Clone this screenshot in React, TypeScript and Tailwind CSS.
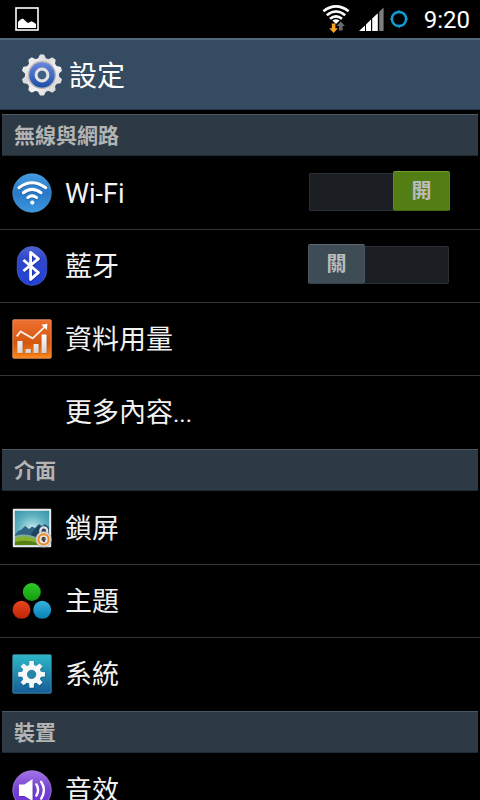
import { useState, type ReactNode } from "react";

const FONT = "font-['Roboto','Noto_Sans_CJK_TC',sans-serif]";

function gearPath(cx: number, cy: number, teeth: number, outer: number, inner: number, tip: number, base: number) {
  const points: string[] = [];
  for (let i = 0; i < teeth; i++) {
    const angle = (i * 2 * Math.PI) / teeth - Math.PI / 2;
    const corners = [
      [inner, -base],
      [outer, -tip],
      [outer, tip],
      [inner, base],
    ];
    for (const [r, w] of corners) {
      const x = cx + r * Math.cos(angle) - w * Math.sin(angle);
      const y = cy + r * Math.sin(angle) + w * Math.cos(angle);
      points.push(`${x.toFixed(2)} ${y.toFixed(2)}`);
    }
  }
  return `M${points.join("L")}Z`;
}

function SettingsGear() {
  return (
    <svg width="42" height="42" viewBox="0 0 42 42" aria-hidden="true">
      <defs>
        <linearGradient id="sg-metal" x1="0" y1="0" x2="1" y2="1">
          <stop offset="0" stopColor="#fff" />
          <stop offset=".35" stopColor="#d8d8d8" />
          <stop offset=".6" stopColor="#f4f4f4" />
          <stop offset="1" stopColor="#c9c9c9" />
        </linearGradient>
        <linearGradient id="sg-blue" x1="0" y1="0" x2="0" y2="1">
          <stop offset="0" stopColor="#6b87dd" />
          <stop offset="1" stopColor="#1c4ea6" />
        </linearGradient>
      </defs>
      <path d={gearPath(21, 21, 10, 19.6, 16, 1.6, 3.4)} fill="url(#sg-metal)" stroke="url(#sg-metal)" strokeWidth="1.6" strokeLinejoin="round" />
      <circle cx="21" cy="21" r="16.8" fill="url(#sg-metal)" />
      <circle cx="21" cy="21" r="13.4" fill="none" stroke="#b8b1ab" strokeWidth="1.2" />
      <circle cx="21" cy="21" r="12.8" fill="url(#sg-blue)" />
      <circle cx="21" cy="21" r="5.8" fill="none" stroke="#e2e2e2" strokeWidth="3.2" />
      <circle cx="21" cy="21" r="4.3" fill="#3f5f83" />
    </svg>
  );
}

function PictureIcon() {
  return (
    <svg width="24" height="24" viewBox="0 0 24 24" aria-hidden="true">
      <rect x="1" y="1" width="22" height="22" fill="#000" stroke="#fff" strokeWidth="1.6" />
      <path d="M3 21V15L5 13L7.5 11.5L9 12.5L11 14.5L13 16L16.5 14.3L19 15.5L21 17V21Z" fill="#fff" />
    </svg>
  );
}

function StatusWifi() {
  return (
    <svg width="28" height="28" viewBox="0 0 28 28" aria-hidden="true">
      <g fill="none" stroke="#fff" strokeWidth="2.6">
        <path d="M1.4 6.2Q14 -3.4 26.6 6.2" />
        <path d="M4.8 10.2Q14 2.8 23.2 10.2" />
        <path d="M8 13.8Q14 8.8 20 13.8" />
      </g>
      <path d="M10.4 15.4Q14 13 17.6 15.4L14 19Z" fill="#fff" />
      <path d="M9.8 18.6H13.4V23.2H16L11.6 28L7.2 23.2H9.8Z" fill="#f7a021" />
      <path d="M17 25.6H20.6V21H23L18.8 16.4L14.4 21H17Z" fill="#6b6b6b" />
    </svg>
  );
}

function StatusSignal() {
  return (
    <svg width="25" height="24" viewBox="0 0 25 24" aria-hidden="true">
      <path d="M0 24L6 18.4V24ZM7 17.4L12 12.6V24H7ZM13.2 11.4L18.8 6.2V24H13.2Z" fill="#fff" />
      <path d="M20.2 4.8L24.6 0.4V24H20.2Z" fill="#7d7d7d" />
    </svg>
  );
}

function StatusRing() {
  return (
    <svg width="18" height="18" viewBox="0 0 18 18" aria-hidden="true">
      <circle cx="9" cy="9" r="7.1" fill="none" stroke="#0d9bd3" strokeWidth="2.5" />
      <path d="M8.2 .2H9.6V1.4H8.2ZM.2 8.4H1.4V9.8H.2ZM16.4 8H17.8V9.4H16.4ZM8.4 16.6H9.8V17.8H8.4Z" fill="#0d9bd3" />
    </svg>
  );
}

function WifiIcon() {
  return (
    <svg width="40" height="40" viewBox="0 0 40 40" aria-hidden="true">
      <defs>
        <linearGradient id="wf" x1="0" y1="0" x2="0" y2="1">
          <stop offset="0" stopColor="#429ce4" />
          <stop offset=".5" stopColor="#2a78c6" />
          <stop offset="1" stopColor="#3c97e2" />
        </linearGradient>
      </defs>
      <circle cx="20" cy="20" r="19.2" fill="url(#wf)" stroke="#5aa2dd" strokeWidth=".7" />
      <g fill="none" strokeWidth="3" strokeLinecap="round">
        <g stroke="#184f88" opacity=".5">
          <path d="M7 15.8Q20 5.8 33.6 15.8M11.4 20.8Q20 14 29 20.8M15.8 25.6Q20 22.2 24.6 25.6" />
        </g>
        <g stroke="#fff">
          <path d="M7 14.8Q20 4.8 33.6 14.8M11.4 19.8Q20 13 29 19.8M15.8 24.6Q20 21.2 24.6 24.6" />
        </g>
      </g>
      <circle cx="20.3" cy="29.6" r="2.1" fill="#fff" />
    </svg>
  );
}

function BluetoothIcon() {
  return (
    <svg width="40" height="40" viewBox="0 0 40 40" aria-hidden="true">
      <defs>
        <linearGradient id="bt" x1="0" y1="0" x2="0" y2="1">
          <stop offset="0" stopColor="#4f63d0" />
          <stop offset=".3" stopColor="#3148cb" />
          <stop offset="1" stopColor="#2141d8" />
        </linearGradient>
      </defs>
      <rect x="5.2" y=".5" width="29.6" height="39" rx="14.8" ry="15" fill="url(#bt)" stroke="#5567c4" strokeWidth=".6" />
      <path d="M11.4 14L26.4 26.6L18.6 33.4V6.4L26.4 12.8L11.4 25" transform="translate(.6 1)" fill="none" stroke="#14268a" strokeWidth="2.8" opacity=".6" />
      <path d="M11.4 14L26.4 26.6L18.6 33.4V6.4L26.4 12.8L11.4 25" fill="none" stroke="#fff" strokeWidth="2.8" strokeLinejoin="round" />
    </svg>
  );
}

function DataIcon() {
  return (
    <svg width="40" height="40" viewBox="0 0 40 40" aria-hidden="true">
      <defs>
        <linearGradient id="du" x1="0" y1="0" x2="0" y2="1">
          <stop offset="0" stopColor="#ee7030" />
          <stop offset=".6" stopColor="#d4560f" />
          <stop offset="1" stopColor="#f98619" />
        </linearGradient>
        <linearGradient id="du-bar" x1="0" y1="0" x2="0" y2="1">
          <stop offset="0" stopColor="#fff" />
          <stop offset="1" stopColor="#d3d3d3" />
        </linearGradient>
      </defs>
      <rect x=".8" y=".8" width="38.4" height="38.4" rx="1" fill="url(#du)" stroke="#f3a06b" strokeWidth=".8" />
      <path d="M6 22.6H11.2V34.6H6ZM14 30.6H19.4V34.6H14ZM22 25.6H27.2V34.6H22ZM30 16.2H35.2V34.6H30Z" fill="#8f3705" opacity=".5" />
      <path d="M5.4 22H10.6V34H5.4ZM13.6 30H18.8V34H13.6ZM21.6 25H26.6V34H21.6ZM29.6 15.6H34.6V34H29.6Z" fill="url(#du-bar)" />
      <path d="M4.8 17.4L8.6 12.4L20.6 19.4L33 7.6" fill="none" stroke="#f8efe8" strokeWidth="1.8" />
      <path d="M29.4 5.8L35.4 4.8L34.8 11Z" fill="#fff" />
    </svg>
  );
}

function LockScreenIcon() {
  return (
    <svg width="40" height="40" viewBox="0 0 40 40" aria-hidden="true">
      <defs>
        <radialGradient id="ls" cx=".5" cy=".55" r=".7">
          <stop offset="0" stopColor="#f2fbfb" />
          <stop offset=".22" stopColor="#a3d6df" />
          <stop offset=".6" stopColor="#5eb0c0" />
          <stop offset="1" stopColor="#3b95a8" />
        </radialGradient>
      </defs>
      <rect x=".8" y=".8" width="38.4" height="38.4" rx="1" fill="#e9ebeb" />
      <rect x="2.8" y="2.8" width="34.4" height="34.4" fill="url(#ls)" />
      <path d="M3 27L6 23L9 22L13 18L17 21L20 18.6L23 20L27 16L30 18L33 16L37 19V32H3Z" fill="#2f6381" />
      <path d="M18 27L23 21L27 17L30 20L33 17L37 21V32H14Z" fill="#1e4260" />
      <path d="M3 28Q13 24.6 24 29L37 31V32H3Z" fill="#79ad9c" />
      <path d="M3 30Q14 26.6 23 31L37 34V37H3Z" fill="#86b22b" />
      <path d="M3 34Q14 31 26 35V37H3Z" fill="#577f15" />
      <path d="M28.4 25V22.8A3.4 3.4 0 0 1 35.2 22.8V26" fill="none" stroke="#e2e2e2" strokeWidth="2.4" />
      <circle cx="31.6" cy="31.4" r="7.9" fill="#dedcd9" stroke="#8a8885" strokeWidth=".5" />
      <circle cx="31.6" cy="31.4" r="5.1" fill="#e8e6e4" stroke="#eb8a20" strokeWidth="2" />
      <circle cx="31.6" cy="31" r="2.2" fill="#4b4d52" />
      <path d="M31 31H33V34H31Z" fill="#4b4d52" />
    </svg>
  );
}

function ThemeIcon() {
  return (
    <svg width="40" height="40" viewBox="0 0 40 40" aria-hidden="true">
      <defs>
        <linearGradient id="th-g" x1="0" y1="0" x2="0" y2="1">
          <stop offset="0" stopColor="#2fc92a" />
          <stop offset="1" stopColor="#139b0c" />
        </linearGradient>
        <linearGradient id="th-r" x1="0" y1="0" x2="0" y2="1">
          <stop offset="0" stopColor="#e8461d" />
          <stop offset="1" stopColor="#bd2406" />
        </linearGradient>
        <linearGradient id="th-b" x1="0" y1="0" x2="0" y2="1">
          <stop offset="0" stopColor="#35b4de" />
          <stop offset="1" stopColor="#087fb4" />
        </linearGradient>
      </defs>
      <circle cx="19.8" cy="11" r="9" fill="url(#th-g)" />
      <circle cx="9.5" cy="28.8" r="9" fill="url(#th-r)" />
      <circle cx="30.2" cy="28.8" r="9" fill="url(#th-b)" />
    </svg>
  );
}

function SystemIcon() {
  const gear = gearPath(19.6, 20.4, 8, 13.4, 8.4, 2.1, 2.6);
  return (
    <svg width="40" height="40" viewBox="0 0 40 40" aria-hidden="true">
      <defs>
        <linearGradient id="sy" x1="0" y1="0" x2="0" y2="1">
          <stop offset="0" stopColor="#2db7c9" />
          <stop offset="1" stopColor="#175c97" />
        </linearGradient>
      </defs>
      <rect x=".8" y=".8" width="38.4" height="38.4" rx="1" fill="url(#sy)" stroke="#4aa6bd" strokeWidth=".7" />
      <g transform="translate(.6 1)" opacity=".5">
        <path d={gear} fill="#0c4560" />
        <circle cx="19.6" cy="20.4" r="9.4" fill="#0c4560" />
      </g>
      <path d={gear} fill="#f6f8f9" />
      <circle cx="19.6" cy="20.4" r="9.6" fill="#f6f8f9" />
      <circle cx="19.6" cy="20.4" r="4.2" fill="#2486ab" stroke="#1b6380" strokeWidth=".7" />
    </svg>
  );
}

function SoundIcon() {
  return (
    <svg width="40" height="40" viewBox="0 0 40 40" aria-hidden="true">
      <defs>
        <linearGradient id="so" x1="0" y1="0" x2="0" y2="1">
          <stop offset="0" stopColor="#a274ea" />
          <stop offset=".5" stopColor="#7440d0" />
          <stop offset="1" stopColor="#6a2fd8" />
        </linearGradient>
      </defs>
      <circle cx="20" cy="20" r="19.2" fill="url(#so)" stroke="#a687dd" strokeWidth=".8" />
      <path d="M7 14.4H12.4L20.6 9V31L12.4 26H7Z" fill="#3c1690" opacity=".5" transform="translate(.7 1)" />
      <path d="M7 14.4H12.4L20.6 9V31L12.4 26H7Z" fill="#fff" />
      <path d="M24.4 14.4Q27.8 20 24.4 25.6M29.2 11.8Q34.6 20 29.2 28.6" fill="none" stroke="#fff" strokeWidth="2.4" strokeLinecap="round" />
    </svg>
  );
}

function Toggle({ id, initial }: { id: string; initial: boolean }) {
  const [on, setOn] = useState(initial);
  return (
    <label className="mb-1 flex h-10 w-[142px] cursor-pointer items-end">
      <input id={id} type="checkbox" role="switch" checked={on} onChange={() => setOn(!on)} className="sr-only" />
      {on && <TrackEnd side="left" />}
      <span
        className={
          on
            ? "flex h-10 w-[57px] items-center justify-center rounded-xs border border-t-[#6f9a2c] border-x-[#5a8a17] border-b-[#456b12] bg-[#527e14] text-xl font-bold text-[#bcbcbc]"
            : "flex h-10 w-[57px] items-center justify-center rounded-xs border border-t-[#5c6972] border-x-[#4a5861] border-b-[#34424b] bg-[#3e4c56] text-xl font-bold text-[#bcbcbc]"
        }
      >
        {on ? "開" : "關"}
      </span>
      {!on && <TrackEnd side="right" />}
    </label>
  );
}

function TrackEnd({ side }: { side: "left" | "right" }) {
  return (
    <span
      className={
        side === "left"
          ? "ml-px h-[38px] flex-1 rounded-l-xs border border-r-0 border-[#2c2f33] bg-[#1b1e22]"
          : "mr-px h-[38px] flex-1 rounded-r-xs border border-l-0 border-[#2c2f33] bg-[#1b1e22]"
      }
    />
  );
}

function SectionTitle({ children }: { children: ReactNode }) {
  return (
    <h2 className="mx-0.5 mb-px flex h-[42px] items-center border-t border-b border-t-[#4b5861] border-b-[#1f2b34] bg-[#2d3a45] px-3 pt-1 text-[21px] font-bold text-[#b4b4b4]">
      {children}
    </h2>
  );
}

const ROW = "flex h-[73px] w-full items-center border-b pl-3 pr-[30px] text-left text-[27px] text-[#f2f2f2]";

function LinkRow({ icon, label, last }: { icon?: ReactNode; label: ReactNode; last?: boolean }) {
  return (
    <li>
      <button type="button" className={`${ROW} ${last ? "border-transparent" : "border-[#353535]"}`}>
        <span className="mr-[13px] w-10">{icon}</span>
        <span className="pt-[3px]">{label}</span>
      </button>
    </li>
  );
}

function SwitchRow({ id, icon, label, on }: { id: string; icon: ReactNode; label: string; on: boolean }) {
  return (
    <li className={`${ROW} border-[#353535]`}>
      <span className="mr-[13px] w-10">{icon}</span>
      <label htmlFor={id} className="flex-1 pt-[3px]">
        {label}
      </label>
      <Toggle id={id} initial={on} />
    </li>
  );
}

export default function App() {
  return (
    <div className={`h-screen overflow-hidden bg-black ${FONT}`} lang="zh-Hant">
      <div className="flex h-[38px] items-center justify-between pl-[15px] pr-2.5 text-white">
        <PictureIcon />
        <div className="flex items-center">
          <StatusWifi />
          <span className="ml-[9px]">
            <StatusSignal />
          </span>
          <span className="ml-1.5 mr-4">
            <StatusRing />
          </span>
          <span className="pt-0.5 text-2xl">9:20</span>
        </div>
      </div>
      <header className="mb-1 flex h-[72px] items-center gap-1.5 border-t-2 border-b border-t-[#53697c] border-b-[#25384a] bg-[#344b61] pl-[21px]">
        <SettingsGear />
        <h1 className="pt-1 text-[28px] text-white">設定</h1>
      </header>
      <main>
        <SectionTitle>無線與網路</SectionTitle>
        <ul>
          <SwitchRow id="wifi" icon={<WifiIcon />} label="Wi-Fi" on />
          <SwitchRow id="bluetooth" icon={<BluetoothIcon />} label="藍牙" on={false} />
          <LinkRow icon={<DataIcon />} label="資料用量" />
          <LinkRow
            label={
              <>
                更多內容<span className="text-2xl">...</span>
              </>
            }
            last
          />
        </ul>
        <SectionTitle>介面</SectionTitle>
        <ul>
          <LinkRow icon={<LockScreenIcon />} label="鎖屏" />
          <LinkRow icon={<ThemeIcon />} label="主題" />
          <LinkRow icon={<SystemIcon />} label="系統" last />
        </ul>
        <SectionTitle>裝置</SectionTitle>
        <ul>
          <LinkRow icon={<SoundIcon />} label="音效" />
        </ul>
      </main>
    </div>
  );
}
